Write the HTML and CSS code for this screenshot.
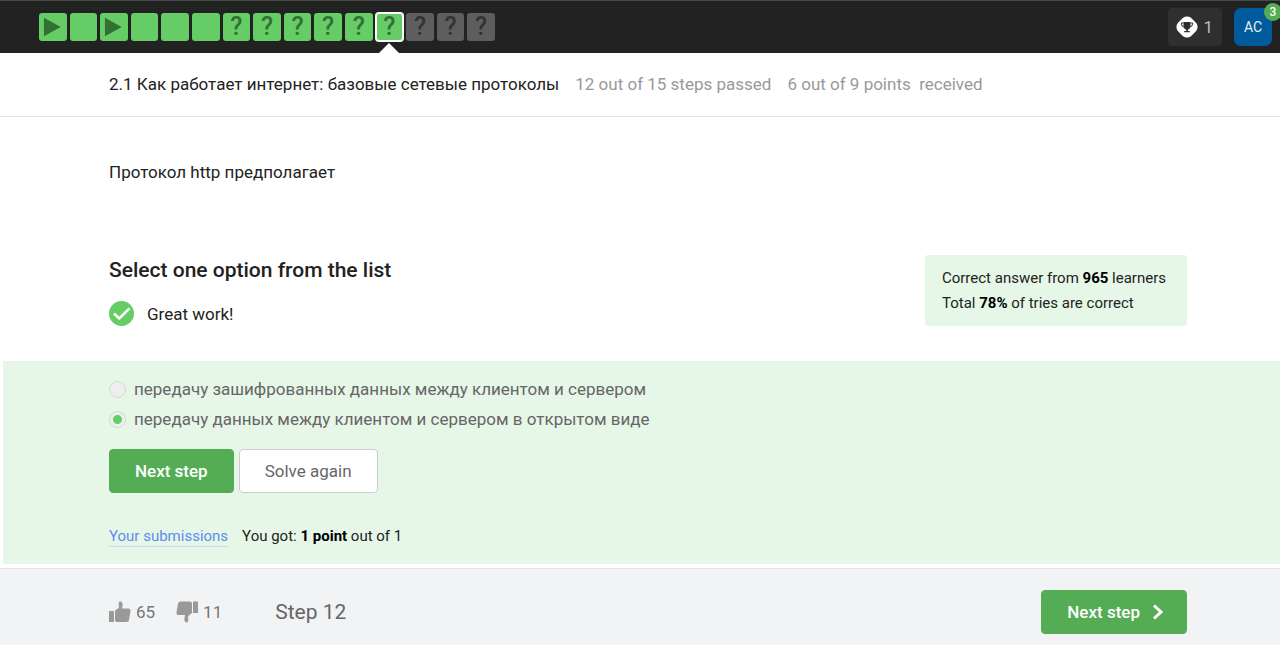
FILE: index.html
```
<!DOCTYPE html>
<html lang="ru">
<head>
<meta charset="utf-8">
<title>2.1 Как работает интернет: базовые сетевые протоколы</title>
<link rel="stylesheet" href="styles.css">
</head>
<body>
<svg class="defs" width="0" height="0" aria-hidden="true">
  <symbol id="play" viewBox="0 0 28 28"><path d="M5 4.500v19L22 14z" fill="currentColor"/></symbol>
</svg>
<header class="topbar">
  <nav class="steps" aria-label="Steps">
    <a class="step" href="#s1" aria-label="Step 1"><svg><use href="#play"/></svg></a>
    <a class="step" href="#s2" aria-label="Step 2"></a>
    <a class="step" href="#s3" aria-label="Step 3"><svg><use href="#play"/></svg></a>
    <a class="step" href="#s4" aria-label="Step 4"></a>
    <a class="step" href="#s5" aria-label="Step 5"></a>
    <a class="step" href="#s6" aria-label="Step 6"></a>
    <a class="step" href="#s7">?</a>
    <a class="step" href="#s8">?</a>
    <a class="step" href="#s9">?</a>
    <a class="step" href="#s10">?</a>
    <a class="step" href="#s11">?</a>
    <a class="step current" href="#s12" aria-current="step">?</a>
    <a class="step todo" href="#s13">?</a>
    <a class="step todo" href="#s14">?</a>
    <a class="step todo" href="#s15">?</a>
  </nav>
  <div class="user">
    <button class="award" type="button">
      <svg width="22" height="22" viewBox="0 0 22 22" aria-hidden="true">
        <path d="M7 1.800Q11-1 15 1.800L20.200 7Q23 11 20.200 15L15 20.200Q11 23 7 20.200L1.800 15Q-1 11 1.800 7z" fill="#fff"/>
        <path d="M7.500 6h7v4.500q-.8 3-2.700 3.300V15h2v1.200H8.200V15h2v-1.200Q8.300 13.500 7.500 10.500z" fill="#2d2d2d"/>
        <path d="M7.500 7H5.300q0 3.800 3 4.300M14.500 7h2.200q0 3.800-3 4.300" fill="none" stroke="#2d2d2d"/>
      </svg>
      <span>1</span>
    </button>
    <button class="avatar" type="button">AC<span class="badge">3</span></button>
  </div>
</header>

<div class="lesson">
  <h1 class="lesson-title">2.1 Как работает интернет: базовые сетевые протоколы</h1>
  <span>12 out of 15 steps passed</span>
  <span>6 out of 9 points&nbsp; received</span>
</div>

<main>
  <p class="question">Протокол http предполагает</p>
  <section class="task">
    <div>
      <h2 class="task-title">Select one option from the list</h2>
      <p class="result">
        <svg width="25" height="25" viewBox="0 0 25 25" aria-hidden="true">
          <circle cx="12.500" cy="12.500" r="12.500" fill="#66cc66"/>
          <path d="M5 12.500l5.200 5L20.500 7.300" fill="none" stroke="#fff" stroke-width="2.600"/>
        </svg>
        Great work!
      </p>
    </div>
    <div class="stats">
      <p>Correct answer from <b>965</b> learners</p>
      <p>Total <b>78%</b> of tries are correct</p>
    </div>
  </section>

  <form class="quiz">
    <label class="option"><input type="radio" name="answer">передачу зашифрованных данных между клиентом и сервером</label>
    <label class="option"><input type="radio" name="answer" checked>передачу данных между клиентом и сервером в открытом виде</label>
    <div class="actions">
      <button class="btn primary" type="button">Next step</button>
      <button class="btn" type="button">Solve again</button>
    </div>
    <div class="score">
      <a href="#submissions">Your submissions</a>
      <span>You got: <b>1 point</b> out of 1</span>
    </div>
  </form>
</main>

<footer class="footer">
  <button class="vote" type="button" aria-label="Like 65">
    <svg width="22" height="22" viewBox="0 0 22 22" aria-hidden="true">
      <path d="M0 10h5v11H0zM6 9.500L9.800 7V1.500Q10.500 0 12 .5 14 1.500 13.700 4L13 7.500h7q2 .5 1.500 2.500L20 19q-.5 2-2.500 2H8l-2-1z" fill="#999"/>
    </svg>65
  </button>
  <button class="vote" type="button" aria-label="Dislike 11">
    <svg width="22" height="22" viewBox="0 0 22 22" aria-hidden="true">
      <path d="M17 .5h5V12h-5zM16 12l-3.800 3v5Q11.500 22 10 21.500 8 20.500 8.300 18L9 14H2Q0 13.500.5 11.500L2 2.500Q2.500.5 4.500.5H14l2 1z" fill="#999"/>
    </svg>11
  </button>
  <span class="step-name">Step 12</span>
  <button class="btn primary next" type="button">Next step
    <svg width="12" height="16" viewBox="0 0 12 16" aria-hidden="true"><path d="M2 1.500L9 8l-7 6.500" fill="none" stroke="#fff" stroke-width="3"/></svg>
  </button>
</footer>
</body>
</html>
```
FILE: styles.css
```
* { box-sizing: border-box; }
body {
  margin: 0;
  min-height: 100vh;
  display: flex;
  flex-direction: column;
  background: #fff;
  color: #222;
  font: 17px/24px Roboto, sans-serif;
}
h1, h2, p { margin: 0; }
button { font: inherit; cursor: pointer; }
b { color: #000; font-weight: 700; }
.defs { position: absolute; }

.topbar {
  display: flex;
  align-items: center;
  justify-content: space-between;
  height: 53px;
  padding: 0 8px 0 39px;
  background: #222;
  border-top: 1px solid #444a46;
}
.steps {
  display: grid;
  grid-template-columns: repeat(15, 1fr);
  gap: 3px;
  width: 456px;
}
.step {
  position: relative;
  height: 28px;
  border-radius: 3px;
  background: #66cc66;
  color: #337033;
  font-size: 25px;
  font-weight: 500;
  line-height: 28px;
  text-align: center;
  text-decoration: none;
}
.step svg { display: block; width: 100%; height: 28px; }
.step.todo { background: #5e5e5e; color: #333; }
.step.current { box-shadow: inset 0 0 0 1px #fff, 0 0 0 1px #fff; }
.step.current::after {
  content: "";
  position: absolute;
  left: 50%;
  top: 30px;
  margin-left: -10px;
  border: 10px solid transparent;
  border-top-width: 0;
  border-bottom-color: #fff;
}
.user { display: flex; align-items: center; gap: 12px; }
.award {
  display: flex;
  align-items: center;
  gap: 5px;
  height: 38px;
  padding: 0 9px 0 8px;
  border: 0;
  border-radius: 4px;
  background: #2f2f2f;
  color: #bbb;
}
.avatar {
  position: relative;
  width: 38px;
  height: 38px;
  padding: 0;
  border: 0;
  border-radius: 7px;
  background: #005b9c;
  color: #e6eef5;
  font-size: 14px;
}
.badge {
  position: absolute;
  top: -5px;
  right: -10px;
  width: 18px;
  height: 18px;
  border-radius: 50%;
  background: #54ad54;
  color: #fff;
  font-size: 12px;
  font-weight: 500;
  line-height: 18px;
}

.lesson {
  display: flex;
  align-items: center;
  gap: 16px;
  height: 64px;
  padding: 0 93px 2px 109px;
  border-bottom: 1px solid #e4e4e4;
  color: #999;
}
.lesson-title { color: #222; font-size: 17px; font-weight: 400; }

main { flex: 1; }
.question { padding: 43px 93px 0 109px; }
.task {
  display: flex;
  justify-content: space-between;
  align-items: flex-start;
  padding: 71px 93px 35px 109px;
}
.task-title { font-size: 21px; line-height: 30px; font-weight: 500; }
.result {
  display: flex;
  align-items: center;
  gap: 13px;
  padding-top: 16px;
}
.stats {
  padding: 11px 21px 10px 17px;
  border-radius: 3px;
  background: #e6f7e8;
  font-size: 15px;
  line-height: 25px;
}
.quiz {
  margin-left: 3px;
  padding: 13px 93px 17px 106px;
  background: #e6f7e8;
}
.option {
  display: flex;
  align-items: center;
  gap: 8px;
  height: 30px;
  color: #666;
}
.option input {
  appearance: none;
  width: 17px;
  height: 17px;
  margin: 0;
  border: 1px solid #d4d8d4;
  border-radius: 50%;
  background: #eee;
}
.option input:checked { background: radial-gradient(circle, #66cc66 4px, #eee 5px); }
.actions { display: flex; gap: 5px; padding-top: 15px; }
.btn {
  height: 44px;
  padding: 0 25px;
  border: 1px solid #ccc;
  border-radius: 4px;
  background: #fff;
  color: #666;
}
.btn.primary {
  border-color: #54ad54;
  background: #54ad54;
  color: #fff;
  font-weight: 500;
}
.score {
  display: flex;
  gap: 14px;
  padding-top: 33px;
  font-size: 15px;
  line-height: 20px;
}
.score a {
  border-bottom: 1px solid #c8dcf0;
  color: #5c8df0;
  text-decoration: none;
}

.footer {
  display: flex;
  align-items: center;
  height: 77px;
  padding: 10px 93px 0 109px;
  border-top: 1px solid #e2e3e5;
  background: #f2f3f5;
  color: #666;
}
.vote {
  display: flex;
  align-items: center;
  gap: 5px;
  margin-right: 21px;
  padding: 0;
  border: 0;
  background: none;
  color: #777;
}
.step-name { margin-left: 32px; font-size: 21px; }
.btn.next {
  display: flex;
  align-items: center;
  gap: 12px;
  margin-left: auto;
  padding-right: 22px;
}
```
